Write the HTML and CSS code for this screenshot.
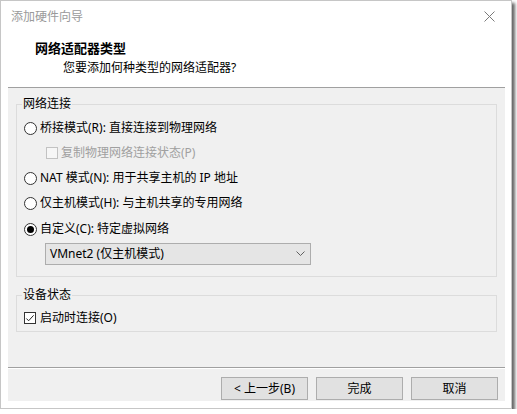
FILE: index.html
```html
<!DOCTYPE html>
<html lang="zh-CN">
<head>
<meta charset="utf-8">
<title>添加硬件向导</title>
<link rel="stylesheet" href="styles.css">
</head>
<body>
<div class="window">
  <div class="titlebar">
    <span class="title">添加硬件向导</span>
    <svg class="close" width="11" height="11" viewBox="0 0 11 11"><path d="M0.5 0.5 L10.5 10.5 M10.5 0.5 L0.5 10.5" stroke="#7a7a7a" stroke-width="1" fill="none"/></svg>
  </div>
  <div class="header">
    <div class="h-title">网络适配器类型</div>
    <div class="h-sub">您要添加何种类型的网络适配器?</div>
  </div>
  <div class="panel">
    <fieldset class="group g1">
      <legend>网络连接</legend>
      <div class="row"><span class="radio"></span><span>桥接模式(R): 直接连接到物理网络</span></div>
      <div class="row indent disabled"><span class="check dis"></span><span>复制物理网络连接状态(P)</span></div>
      <div class="row"><span class="radio"></span><span>NAT 模式(N): 用于共享主机的 IP 地址</span></div>
      <div class="row"><span class="radio"></span><span>仅主机模式(H): 与主机共享的专用网络</span></div>
      <div class="row custom"><span class="radio on"></span><span>自定义(C): 特定虚拟网络</span></div>
      <div class="select">
        <span>VMnet2 (仅主机模式)</span>
        <svg width="9" height="6" viewBox="0 0 9 6"><path d="M0.5 0.5 L4.5 4.5 L8.5 0.5" stroke="#606060" stroke-width="1" fill="none"/></svg>
      </div>
    </fieldset>
    <fieldset class="group g2">
      <legend>设备状态</legend>
      <div class="row"><span class="check on"><svg width="11" height="11" viewBox="0 0 11 11"><path d="M1.5 5.5 L4 8 L9.5 2" stroke="#222" stroke-width="1.1" fill="none"/></svg></span><span>启动时连接(O)</span></div>
    </fieldset>
    <div class="footer">
      <button class="btn">&lt; 上一步(B)</button>
      <button class="btn">完成</button>
      <button class="btn">取消</button>
    </div>
  </div>
</div>
</body>
</html>
```

FILE: styles.css
```css
* { box-sizing: border-box; }
html, body { margin: 0; padding: 0; background: #fff; }
body {
  font-family: "Noto Sans", "Noto Sans CJK SC", sans-serif;
  font-size: 12px;
  line-height: 16px;
  color: #000;
}
.window {
  width: 512px;
  height: 409px;
  border: 1px solid #c6c6c6;
  background: #fff;
  box-shadow: 3px 3px 3px rgba(0,0,0,0.6);
  padding: 0 6px 7px 7px;
  display: flex;
  flex-direction: column;
}
.titlebar {
  height: 31px;
  display: flex;
  align-items: center;
  justify-content: space-between;
  padding: 0 10px 0 3px;
}
.title { color: #9a9a9a; }
.close { display: block; }
.header {
  height: 55px;
  padding: 8px 0 0 27px;
}
.h-title {
  font-weight: 700;
  font-size: 13px;
  line-height: 16px;
  font-family: "Noto Sans CJK SC", sans-serif;
}
.h-sub {
  margin-top: 4px;
  padding-left: 28px;
}
.panel {
  flex: 1;
  background: #f0f0f0;
  border-top: 1px solid #a0a0a0;
  padding-top: 8px;
  display: flex;
  flex-direction: column;
}
.group {
  margin: 0 8px;
  border: 1px solid #dcdcdc;
  padding: 6px 0 11px 7px;
  display: flex;
  flex-direction: column;
  gap: 5px;
  min-width: 0;
}
.group legend {
  padding: 0 1px;
  margin-left: -2px;
  line-height: 16px;
}
.g2 {
  margin-top: 10px;
  padding-top: 5px;
  padding-bottom: 3px;
}
.row {
  height: 20px;
  display: flex;
  align-items: center;
  white-space: nowrap;
}
.custom { margin-top: 1px; margin-bottom: -1px; }
.indent { padding-left: 22px; }
.disabled { color: #a0a0a0; }
.radio {
  width: 13px;
  height: 13px;
  border: 1px solid #333;
  border-radius: 50%;
  background: #fff;
  margin-right: 3px;
  display: flex;
  align-items: center;
  justify-content: center;
  flex: none;
}
.radio.on::after {
  content: "";
  width: 7px;
  height: 7px;
  border-radius: 50%;
  background: #000;
}
.check {
  width: 12px;
  height: 12px;
  border: 1px solid #333;
  background: #fff;
  margin-right: 4px;
  flex: none;
  display: flex;
  align-items: center;
  justify-content: center;
}
.check svg { display: block; }
.check.dis {
  border-color: #c2c2c2;
  background: #f6f6f6;
  margin-right: 3px;
}
.select {
  margin-left: 21px;
  width: 266px;
  height: 22px;
  border: 1px solid #adadad;
  background: #e5e5e5;
  display: flex;
  align-items: center;
  justify-content: space-between;
  padding: 0 5px 0 4px;
}
.select svg { display: block; }
.footer {
  margin-top: auto;
  border-top: 1px solid #a0a0a0;
  box-shadow: inset 0 1px 0 #fff;
  padding: 9px 7px 1px 0;
  display: flex;
  justify-content: flex-end;
  gap: 8px;
}
.btn {
  width: 87px;
  height: 23px;
  border: 1px solid #adadad;
  background: #e1e1e1;
  font: inherit;
  color: #000;
  padding: 0;
}
```
